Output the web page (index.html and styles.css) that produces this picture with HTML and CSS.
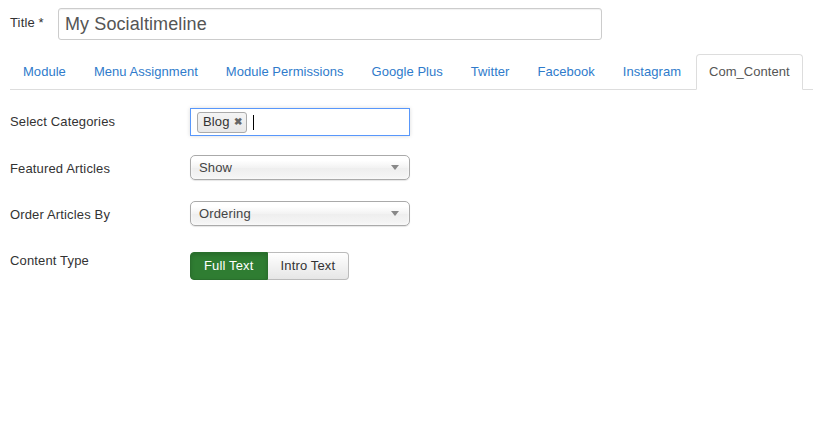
FILE: index.html
```html
<!DOCTYPE html>
<html>
<head>
<meta charset="utf-8">
<link rel="stylesheet" href="styles.css">
</head>
<body>
<div class="page">
  <div class="title-row">
    <label class="title-label">Title *</label>
    <div class="title-input">My Socialtimeline</div>
  </div>
  <ul class="tabs">
    <li class="tab"><a>Module</a></li>
    <li class="tab"><a>Menu Assignment</a></li>
    <li class="tab"><a>Module Permissions</a></li>
    <li class="tab"><a>Google Plus</a></li>
    <li class="tab"><a>Twitter</a></li>
    <li class="tab"><a>Facebook</a></li>
    <li class="tab"><a>Instagram</a></li>
    <li class="tab active"><a>Com_Content</a></li>
  </ul>
  <div class="form">
    <div class="row row-cat">
      <div class="label">Select Categories</div>
      <div class="multi">
        <span class="chip">Blog <span class="chip-x">&#10006;</span></span>
        <span class="caret"></span>
      </div>
    </div>
    <div class="row row-feat">
      <div class="label">Featured Articles</div>
      <div class="select"><span>Show</span><span class="arrow"></span></div>
    </div>
    <div class="row row-order">
      <div class="label">Order Articles By</div>
      <div class="select"><span>Ordering</span><span class="arrow"></span></div>
    </div>
    <div class="row row-type">
      <div class="label label-top">Content Type</div>
      <div class="btn-group">
        <span class="btn btn-active">Full Text</span>
        <span class="btn">Intro Text</span>
      </div>
    </div>
  </div>
</div>
</body>
</html>
```
FILE: styles.css
```css
html, body {
  margin: 0;
  padding: 0;
  background: #fff;
}
body {
  font-family: "Liberation Sans", Arial, sans-serif;
  font-size: 13px;
  line-height: 18px;
  color: #333;
  letter-spacing: 0.15px;
}
.page {
  padding: 8px 0 0 10px;
}
.title-row {
  display: flex;
  align-items: center;
}
.title-label {
  width: 48px;
  margin-top: -3px;
}
.title-input {
  box-sizing: border-box;
  width: 544px;
  height: 32px;
  border: 1px solid #ccc;
  border-radius: 3px;
  padding: 0 6px;
  font-size: 18px;
  line-height: 30px;
  color: #555;
  letter-spacing: 0.1px;
  box-shadow: inset 0 1px 1px rgba(0,0,0,0.06);
}
.tabs {
  list-style: none;
  margin: 14px 0 0 0;
  padding: 0;
  display: flex;
  border-bottom: 1px solid #ddd;
  white-space: nowrap;
  letter-spacing: 0.04px;
}
.tab {
  flex-shrink: 0;
  margin-right: 2px;
  margin-bottom: -1px;
}
.tab a {
  display: block;
  padding: 8px 12px;
  line-height: 18px;
  border: 1px solid transparent;
  border-radius: 4px 4px 0 0;
  color: #2f7bcb;
}
.tab.active a {
  color: #555;
  border-color: #ddd;
  border-bottom-color: #fff;
  background: #fff;
}
.form {
  margin-top: 18px;
}
.row {
  display: flex;
  align-items: flex-start;
}
.label {
  width: 180px;
  padding-top: 5px;
}
.label-top {
  padding-top: 0;
}
.row-cat { margin-bottom: 19px; }
.row-feat { margin-bottom: 21px; }
.row-order { margin-bottom: 26px; }
.multi {
  box-sizing: border-box;
  width: 220px;
  height: 28px;
  border: 1px solid #5897fb;
  box-shadow: 0 0 4px rgba(0,0,0,0.15);
  display: flex;
  align-items: center;
  padding-left: 6px;
  background: #fff;
}
.chip {
  box-sizing: border-box;
  height: 21px;
  display: inline-flex;
  align-items: center;
  padding: 0 4px 0 5px;
  border: 1px solid #aaa;
  border-radius: 3px;
  background: linear-gradient(#f4f4f4, #e8e8e8);
  color: #333;
  font-size: 13px;
}
.chip-x {
  font-size: 10px;
  font-weight: bold;
  color: #666;
  margin-left: 4px;
}
.caret {
  display: inline-block;
  width: 1px;
  height: 15px;
  background: #000;
  margin-left: 6px;
}
.select {
  box-sizing: border-box;
  width: 220px;
  height: 25px;
  border: 1px solid #aaa;
  border-radius: 5px;
  background: linear-gradient(#fff 20%, #f3f3f3 50%, #eee 52%, #f6f6f6 100%);
  box-shadow: 0 0 3px #fff inset, 0 1px 1px rgba(0,0,0,0.1);
  display: flex;
  align-items: center;
  justify-content: space-between;
  padding: 0 10px 0 8px;
  color: #444;
  line-height: 23px;
}
.arrow {
  width: 0;
  height: 0;
  border-left: 4px solid transparent;
  border-right: 4px solid transparent;
  border-top: 5px solid #888;
}
.btn-group {
  display: flex;
}
.btn {
  box-sizing: border-box;
  height: 28px;
  line-height: 26px;
  padding: 0 13px;
  border: 1px solid #bbb;
  color: #333;
  background: linear-gradient(#fff, #e6e6e6);
  font-size: 13px;
}
.btn:first-child {
  border-radius: 4px 0 0 4px;
}
.btn:last-child {
  border-radius: 0 4px 4px 0;
  border-left: 0;
}
.btn-active {
  background: #2f7d32;
  border-color: #2a6f2d;
  color: #fff;
  box-shadow: inset 0 2px 4px rgba(0,0,0,0.15);
}
```
